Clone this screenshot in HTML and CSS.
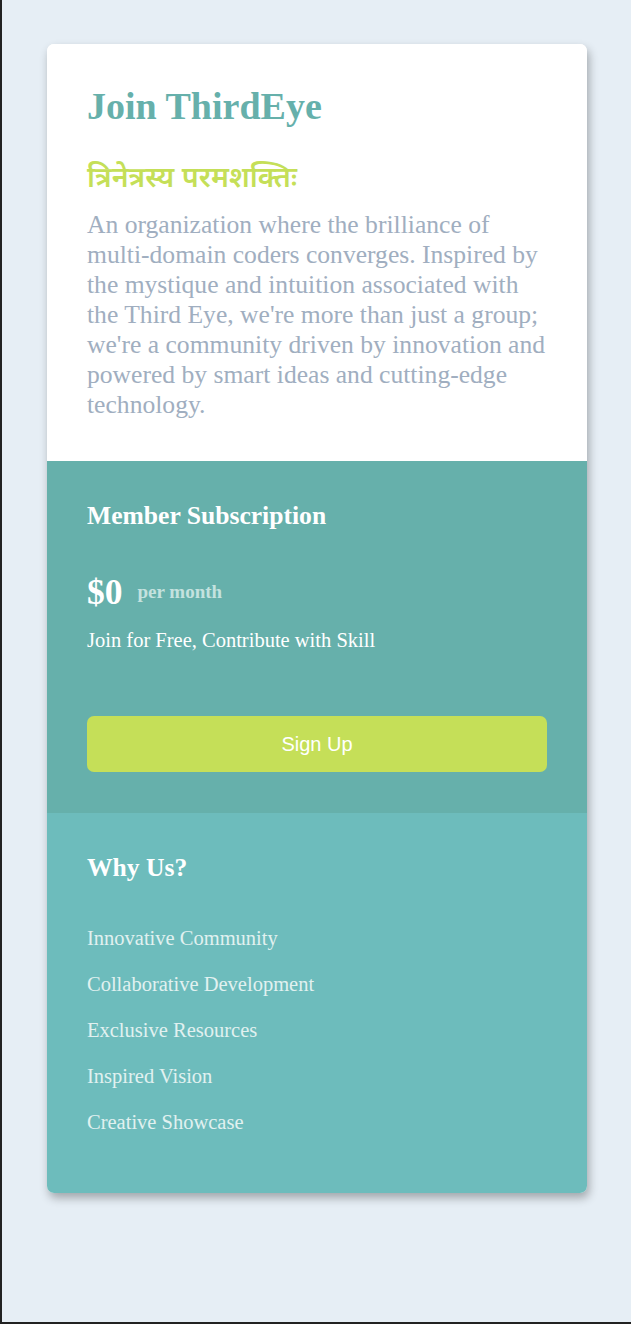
FILE: index.html
```html
<!DOCTYPE html>
<html lang="en">
<head>
<meta charset="utf-8">
<title>Join ThirdEye</title>
<link rel="stylesheet" href="styles.css">
</head>
<body>
<div class="page">
  <main class="card">
    <section class="intro">
      <h1 class="title">Join ThirdEye</h1>
      <h2 class="motto">त्रिनेत्रस्य परमशक्तिः</h2>
      <p class="desc">An organization where the brilliance of multi-domain coders converges. Inspired by the mystique and intuition associated with the Third Eye, we're more than just a group; we're a community driven by innovation and powered by smart ideas and cutting-edge technology.</p>
    </section>
    <section class="subscription">
      <h2 class="section-title">Member Subscription</h2>
      <div class="price-row">
        <span class="price">$0</span>
        <span class="period">per month</span>
      </div>
      <p class="tagline">Join for Free, Contribute with Skill</p>
      <button class="signup">Sign Up</button>
    </section>
    <section class="why">
      <h2 class="section-title">Why Us?</h2>
      <ul class="reasons">
        <li>Innovative Community</li>
        <li>Collaborative Development</li>
        <li>Exclusive Resources</li>
        <li>Inspired Vision</li>
        <li>Creative Showcase</li>
      </ul>
    </section>
  </main>
</div>
</body>
</html>
```

FILE: styles.css
```css
* { box-sizing: border-box; }
html, body { margin: 0; padding: 0; }
body {
  background: #e6eef5;
  font-family: "Liberation Serif", "Times New Roman", serif;
}
.page {
  min-height: 1324px;
  border-left: 2px solid #222;
  border-bottom: 2px solid #222;
  padding: 44px 44px 40px 45px;
}
.card {
  width: 540px;
  border-radius: 7px;
  overflow: hidden;
  box-shadow: 2px 5px 10px rgba(0, 0, 0, 0.3);
  background: #fff;
}
.intro {
  padding: 40px 40px 41px;
  background: #fff;
}
.title {
  margin: 0;
  font-size: 38px;
  line-height: 44px;
  font-weight: bold;
  color: #66b0ab;
}
.motto {
  margin: 32px 0 0;
  font-family: "Noto Sans Devanagari", "Nirmala UI", "Noto Sans", sans-serif;
  font-size: 28.5px;
  line-height: 40px;
  font-weight: 600;
  color: #c5df58;
}
.desc {
  margin: 10px 0 0;
  font-size: 25.6px;
  line-height: 30px;
  color: #a0aec0;
}
.subscription {
  background: #66b0ab;
  padding: 40px 40px 41px;
  color: #fff;
}
.why {
  background: #6dbcbc;
  padding: 40px 40px 59px;
  color: #fff;
}
.section-title {
  margin: 0;
  font-size: 25.6px;
  line-height: 30px;
  font-weight: bold;
  color: #fff;
}
.price-row {
  margin-top: 41px;
  display: flex;
  align-items: center;
  gap: 15px;
}
.price {
  font-size: 35.5px;
  font-weight: bold;
  line-height: 40px;
}
.period {
  font-size: 19px;
  font-weight: bold;
  color: #c4e2df;
}
.tagline {
  margin: 16px 0 0;
  font-size: 20.5px;
  line-height: 24px;
}
.signup {
  display: block;
  width: 100%;
  height: 56px;
  margin-top: 64px;
  border: 0;
  border-radius: 7px;
  background: #c5df58;
  color: #fff;
  font-family: "Liberation Sans", Arial, sans-serif;
  font-size: 20px;
}
.reasons {
  list-style: none;
  margin: 43px 0 0;
  padding: 0;
}
.reasons li {
  font-size: 20.5px;
  line-height: 24px;
  margin-bottom: 22px;
  color: #e1f1f0;
}
.reasons li:last-child { margin-bottom: 0; }
```
